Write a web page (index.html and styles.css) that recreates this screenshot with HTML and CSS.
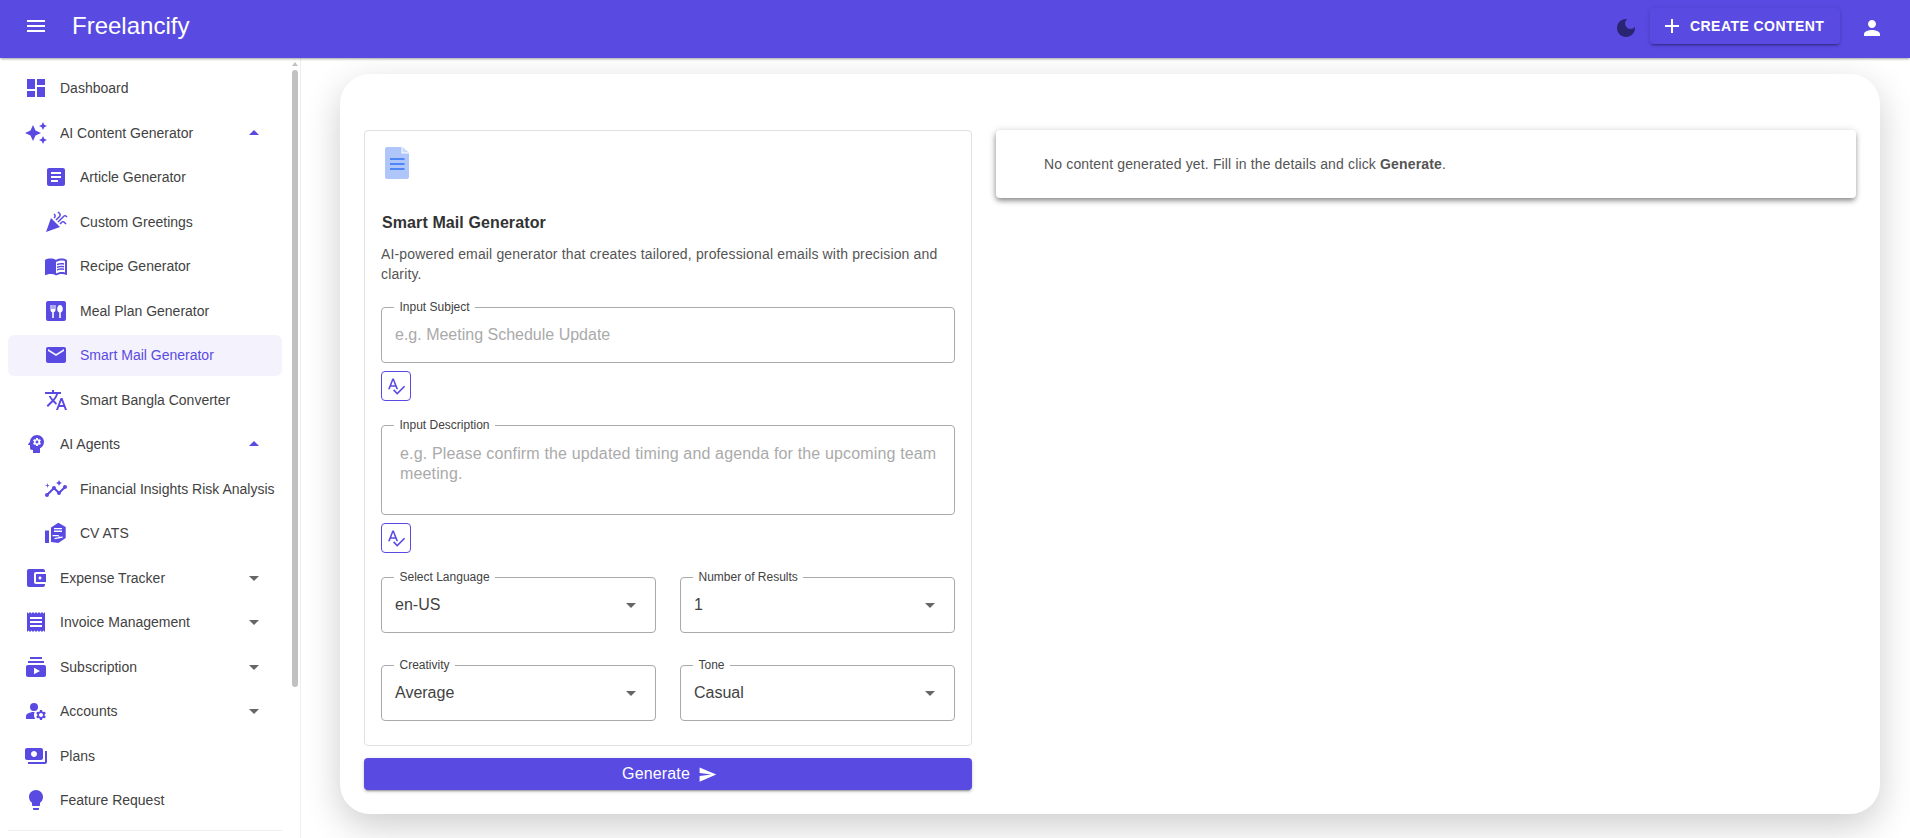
FILE: index.html
```html
<!DOCTYPE html>
<html lang="en">
<head>
<meta charset="utf-8">
<title>Freelancify</title>
<link rel="stylesheet" href="styles.css">
</head>
<body>
<div class="app">
  <header class="appbar">
    <svg class="icon bar-menu" viewBox="0 0 24 24"><path d="M3 18h18v-2H3v2zm0-5h18v-2H3v2zm0-7v2h18V6H3z"/></svg>
    <div class="brand">Freelancify</div>
    <svg class="icon moon" viewBox="0 0 24 24"><path d="M12 3c-4.97 0-9 4.03-9 9s4.03 9 9 9 9-4.03 9-9c0-.46-.04-.92-.1-1.36-.98 1.37-2.58 2.26-4.4 2.26-2.98 0-5.4-2.42-5.4-5.4 0-1.81.89-3.42 2.26-4.4-.44-.06-.9-.1-1.36-.1z"/></svg>
    <button class="create"><svg class="icon" viewBox="0 0 24 24"><path d="M19 13h-6v6h-2v-6H5v-2h6V5h2v6h6v2z"/></svg>Create Content</button>
    <svg class="icon user" viewBox="0 0 24 24"><path d="M12 12c2.21 0 4-1.79 4-4s-1.79-4-4-4-4 1.79-4 4 1.79 4 4 4zm0 2c-2.67 0-8 1.34-8 4v2h16v-2c0-2.66-5.33-4-8-4z"/></svg>
  </header>
  <div class="body">
    <aside class="sidebar">
      <nav class="nav">
        <a class="row"><svg class="icon" viewBox="0 0 24 24"><path d="M3 13h8V3H3v10zm0 8h8v-6H3v6zm10 0h8V11h-8v10zm0-18v6h8V3h-8z"/></svg><span>Dashboard</span></a>
        <a class="row"><svg class="icon" viewBox="0 0 24 24"><path d="M19 9l1.25-2.75L23 5l-2.75-1.25L19 1l-1.25 2.75L15 5l2.75 1.25L19 9zm-7.5.5L9 4 6.5 9.5 1 12l5.5 2.5L9 20l2.5-5.5L17 12l-5.5-2.5zM19 15l-1.25 2.75L15 19l2.75 1.25L19 23l1.25-2.75L23 19l-2.75-1.25L19 15z"/></svg><span>AI Content Generator</span><svg class="icon caret up" viewBox="0 0 24 24"><path d="M7 14l5-5 5 5z"/></svg></a>
        <a class="row sub"><svg class="icon" viewBox="0 0 24 24"><path d="M19 3H5c-1.1 0-2 .9-2 2v14c0 1.1.9 2 2 2h14c1.1 0 2-.9 2-2V5c0-1.1-.9-2-2-2zm-5 14H7v-2h7v2zm3-4H7v-2h10v2zm0-4H7V7h10v2z"/></svg><span>Article Generator</span></a>
        <a class="row sub"><svg class="icon" viewBox="0 0 24 24"><path d="M2 22l14-5-9-9zM14.53 12.53l5.59-5.59c.49-.49 1.28-.49 1.77 0l.59.59 1.06-1.06-.59-.59c-1.07-1.07-2.82-1.07-3.89 0l-5.59 5.59 1.06 1.06zM10.06 6.88l-.59.59 1.06 1.06.59-.59c1.07-1.07 1.07-2.82 0-3.89l-.59-.59-1.06 1.07.59.59c.48.48.48 1.28 0 1.76zM17.06 11.88l-1.59 1.59 1.06 1.06 1.59-1.59c.49-.49 1.28-.49 1.77 0l1.61 1.61 1.06-1.06-1.61-1.61c-1.08-1.07-2.82-1.07-3.89 0zM15.06 5.88l-3.59 3.59 1.06 1.06 3.59-3.59c1.07-1.07 1.07-2.82 0-3.89l-1.59-1.59-1.06 1.06 1.59 1.59c.48.49.48 1.29 0 1.77z"/></svg><span>Custom Greetings</span></a>
        <a class="row sub"><svg class="icon" viewBox="0 0 24 24"><path d="M21 5c-1.11-.35-2.33-.5-3.5-.5-1.95 0-4.05.4-5.5 1.5-1.45-1.1-3.55-1.5-5.5-1.5S2.45 4.9 1 6v14.65c0 .25.25.5.5.5.1 0 .15-.05.25-.05C3.1 20.45 5.05 20 6.5 20c1.95 0 4.05.4 5.5 1.5 1.35-.85 3.8-1.5 5.5-1.5 1.65 0 3.35.3 4.75 1.05.1.05.15.05.25.05.25 0 .5-.25.5-.5V6c-.6-.45-1.25-.75-2-1zm0 13.5c-1.1-.35-2.3-.5-3.5-.5-1.7 0-4.15.65-5.5 1.5V8c1.35-.85 3.8-1.5 5.5-1.5 1.2 0 2.4.15 3.5.5v11.5z"/><path d="M17.5 10.5c.88 0 1.73.09 2.5.26V9.24c-.79-.15-1.64-.24-2.5-.24-1.7 0-3.24.29-4.5.83v1.66c1.13-.64 2.7-.99 4.5-.99zM13 12.49v1.66c1.13-.64 2.7-.99 4.5-.99.88 0 1.73.09 2.5.26V11.9c-.79-.15-1.64-.24-2.5-.24-1.7 0-3.24.3-4.5.83zM17.5 14.33c-1.7 0-3.24.29-4.5.83v1.66c1.13-.64 2.7-.99 4.5-.99.88 0 1.73.09 2.5.26v-1.52c-.79-.16-1.64-.24-2.5-.24z"/></svg><span>Recipe Generator</span></a>
        <a class="row sub"><svg class="icon" viewBox="0 0 24 24"><path fill-rule="evenodd" d="M4 2h16a2 2 0 0 1 2 2v16a2 2 0 0 1-2 2H4a2 2 0 0 1-2-2V4a2 2 0 0 1 2-2zm2.500 4v5c0 1.200.7 2 1.700 2.300V19h1.600v-5.700c1-.3 1.700-1.100 1.700-2.300V6h-1.100v4h-.9V6H8.500v4h-.9V6zm9.500 0c-1.700 0-2.800 1.900-2.800 4 0 1.700.8 3 2 3.400V19h1.600v-5.600c1.200-.4 2-1.700 2-3.400 0-2.100-1.100-4-2.800-4z"/></svg><span>Meal Plan Generator</span></a>
        <a class="row sub active"><svg class="icon" viewBox="0 0 24 24"><path d="M20 4H4c-1.1 0-1.99.9-1.99 2L2 18c0 1.1.9 2 2 2h16c1.1 0 2-.9 2-2V6c0-1.1-.9-2-2-2zm0 4l-8 5-8-5V6l8 5 8-5v2z"/></svg><span>Smart Mail Generator</span></a>
        <a class="row sub"><svg class="icon" viewBox="0 0 24 24"><path d="M12.87 15.07l-2.54-2.51.03-.03c1.74-1.94 2.98-4.17 3.71-6.53H17V4h-7V2H8v2H1v1.99h11.17C11.5 7.92 10.44 9.75 9 11.35 8.07 10.32 7.3 9.19 6.69 8h-2c.73 1.63 1.73 3.17 2.98 4.56l-5.09 5.02L4 19l5-5 3.11 3.11.76-2.04zM18.5 10h-2L12 22h2l1.12-3h4.75L21 22h2l-4.5-12zm-2.62 7l1.62-4.33L19.12 17h-3.24z"/></svg><span>Smart Bangla Converter</span></a>
        <a class="row"><svg class="icon" viewBox="0 0 24 24"><path d="M13 8.57c-.79 0-1.43.64-1.43 1.43s.64 1.43 1.43 1.43 1.43-.64 1.43-1.43-.64-1.43-1.43-1.43z"/><path d="M13 3C9.25 3 6.2 5.94 6.02 9.64L4.1 12.2c-.25.33-.01.8.4.8H6v3c0 1.1.9 2 2 2h1v3h7v-4.68c2.36-1.12 4-3.53 4-6.32 0-3.87-3.13-7-7-7zm3 7c0 .13-.01.26-.02.39l.83.66c.08.06.1.16.05.25l-.8 1.39c-.05.09-.16.12-.24.09l-.99-.4c-.21.16-.43.29-.67.39L14 13.83c-.01.1-.1.17-.2.17h-1.6c-.1 0-.18-.07-.2-.17l-.15-1.06c-.25-.1-.47-.23-.68-.39l-.99.4c-.09.03-.2 0-.25-.09l-.8-1.39c-.05-.08-.03-.19.05-.25l.84-.66c-.01-.13-.02-.26-.02-.39s.02-.27.04-.39l-.85-.66c-.08-.06-.1-.16-.05-.26l.8-1.38c.05-.09.15-.12.24-.09l1 .4c.2-.15.43-.29.67-.39L12 6.17c.02-.1.1-.17.2-.17h1.6c.1 0 .18.07.2.17l.15 1.06c.24.1.46.23.67.39l1-.4c.09-.03.2 0 .24.09l.8 1.38c.05.09.03.2-.05.26l-.85.66c.03.12.04.25.04.39z"/></svg><span>AI Agents</span><svg class="icon caret up" viewBox="0 0 24 24"><path d="M7 14l5-5 5 5z"/></svg></a>
        <a class="row sub"><svg class="icon" viewBox="0 0 24 24"><path d="M21 8c-1.45 0-2.26 1.44-1.93 2.51l-3.55 3.56c-.3-.09-.74-.09-1.04 0l-2.55-2.55C12.27 10.45 11.46 9 10 9c-1.45 0-2.27 1.44-1.93 2.52l-4.56 4.55C2.44 15.74 1 16.55 1 18c0 1.1.9 2 2 2 1.45 0 2.26-1.44 1.93-2.51l4.55-4.56c.3.09.74.09 1.04 0l2.55 2.55C12.73 16.55 13.54 18 15 18c1.45 0 2.27-1.44 1.93-2.52l3.56-3.55c1.07.33 2.51-.48 2.51-1.93 0-1.1-.9-2-2-2z"/><path d="M15 9l.94-2.07L18 6l-2.06-.93L15 3l-.92 2.07L12 6l2.08.93zM3.5 11 4 9l2-.5L4 8l-.5-2L3 8l-2 .5L3 9z"/></svg><span>Financial Insights Risk Analysis</span></a>
        <a class="row sub"><svg class="icon" viewBox="0 0 24 24"><path d="M1 9.500h4V22H1z"/><path fill-rule="evenodd" d="M14.300 1.700 21.700 6v11l-7.400 5-7.300-1V6.500zM10 7v1.300h8V7zm0 2.600v1.300h8V9.600zm-1.500 4.300v1.400h5.800c.6 0 .7.800.1 1l-3.900.7.200 1.300 7.800-1.500c.6-.2.300-1.300-.4-1.200l-2.600.4c-.1-1.300-.9-1.900-1.800-1.900z"/></svg><span>CV ATS</span></a>
        <a class="row"><svg class="icon" viewBox="0 0 24 24"><path d="M21 18v1c0 1.1-.9 2-2 2H5c-1.11 0-2-.9-2-2V5c0-1.1.89-2 2-2h14c1.1 0 2 .9 2 2v1h-9c-1.11 0-2 .9-2 2v8c0 1.1.89 2 2 2h9zm-9-2h10V8H12v8zm4-2.500c-.83 0-1.500-.67-1.500-1.500s.67-1.500 1.500-1.500 1.500.67 1.500 1.500-.67 1.500-1.500 1.500z"/></svg><span>Expense Tracker</span><svg class="icon caret" viewBox="0 0 24 24"><path d="M7 10l5 5 5-5z"/></svg></a>
        <a class="row"><svg class="icon" viewBox="0 0 24 24"><path d="M18 17H6v-2h12v2zm0-4H6v-2h12v2zm0-4H6V7h12v2zM3 22l1.500-1.500L6 22l1.500-1.500L9 22l1.500-1.500L12 22l1.500-1.500L15 22l1.500-1.500L18 22l1.500-1.500L21 22V2l-1.500 1.500L18 2l-1.500 1.500L15 2l-1.500 1.500L12 2l-1.500 1.500L9 2 7.500 3.500 6 2 4.500 3.500 3 2v20z"/></svg><span>Invoice Management</span><svg class="icon caret" viewBox="0 0 24 24"><path d="M7 10l5 5 5-5z"/></svg></a>
        <a class="row"><svg class="icon" viewBox="0 0 24 24"><path d="M20 8H4V6h16v2zm-2-6H6v2h12V2zm4 10v8c0 1.1-.9 2-2 2H4c-1.1 0-2-.9-2-2v-8c0-1.1.9-2 2-2h16c1.1 0 2 .9 2 2zm-6 4l-6-3.27v6.53L16 16z"/></svg><span>Subscription</span><svg class="icon caret" viewBox="0 0 24 24"><path d="M7 10l5 5 5-5z"/></svg></a>
        <a class="row"><svg class="icon" viewBox="0 0 24 24"><circle cx="10" cy="8" r="4"/><path d="M10.67 13.02c-.22-.01-.44-.02-.67-.02-2.42 0-4.68.67-6.61 1.82-.88.52-1.39 1.5-1.39 2.53V20h9.26c-.79-1.13-1.26-2.51-1.26-4 0-1.07.25-2.07.67-2.98z"/><path d="M20.75 16c0-.22-.03-.42-.06-.63l1.14-1.01-1-1.73-1.45.49c-.32-.27-.68-.48-1.08-.63L18 11h-2l-.3 1.49c-.4.15-.76.36-1.08.63l-1.45-.49-1 1.73 1.14 1.01c-.03.21-.06.41-.06.63s.03.42.06.63l-1.14 1.01 1 1.73 1.45-.49c.32.27.68.48 1.08.63L16 21h2l.3-1.49c.4-.15.76-.36 1.08-.63l1.45.49 1-1.73-1.14-1.01c.03-.21.06-.41.06-.63zM17 18c-1.1 0-2-.9-2-2s.9-2 2-2 2 .9 2 2-.9 2-2 2z"/></svg><span>Accounts</span><svg class="icon caret" viewBox="0 0 24 24"><path d="M7 10l5 5 5-5z"/></svg></a>
        <a class="row"><svg class="icon" viewBox="0 0 24 24"><path d="M19 14V6c0-1.1-.9-2-2-2H3c-1.1 0-2 .9-2 2v8c0 1.1.9 2 2 2h14c1.1 0 2-.9 2-2zm-9-1c-1.66 0-3-1.34-3-3s1.34-3 3-3 3 1.34 3 3-1.34 3-3 3zm13-6v11c0 1.1-.9 2-2 2H4v-2h17V7h2z"/></svg><span>Plans</span></a>
        <a class="row"><svg class="icon" viewBox="0 0 24 24"><path d="M9 21c0 .55.45 1 1 1h4c.55 0 1-.45 1-1v-1H9v1zm3-19C8.14 2 5 5.14 5 9c0 2.38 1.19 4.47 3 5.74V17c0 .55.45 1 1 1h6c.55 0 1-.45 1-1v-2.26c1.81-1.27 3-3.36 3-5.74 0-3.86-3.14-7-7-7z"/></svg><span>Feature Request</span></a>
        <hr class="divider">
      </nav>
      <div class="scroll-arrow"></div>
      <div class="scroll-thumb"></div>
    </aside>
    <main class="main">
      <section class="card">
        <div class="form-col">
          <div class="panel">
            <svg class="doc" viewBox="0 0 24 32"><path class="doc-page" d="M2 0h14.500v6.500H24V30a2 2 0 0 1-2 2H2a2 2 0 0 1-2-2V2a2 2 0 0 1 2-2z"/><path class="doc-fold" d="M17.500 0 24 5.500h-6.500z"/><path class="doc-lines" d="M5 11h14.500v2H5zM5 16h14.500v2H5zM5 21h14.500v2H5z"/></svg>
            <h2 class="title">Smart Mail Generator</h2>
            <p class="desc">AI-powered email generator that creates tailored, professional emails with precision and clarity.</p>
            <fieldset class="field">
              <legend>Input Subject</legend>
              <input class="control" type="text" placeholder="e.g. Meeting Schedule Update">
            </fieldset>
            <button class="spell"><svg class="icon" viewBox="0 0 24 24"><path d="M12.45 16h2.09L9.43 3H7.57L2.46 16h2.09l1.12-3h5.64l1.14 3zm-6.02-5L8.5 5.48 10.57 11H6.43zm15.16.59l-8.09 8.09L9.83 16l-1.41 1.41 5.09 5.09L23 13l-1.41-1.41z"/></svg></button>
            <fieldset class="field area">
              <legend>Input Description</legend>
              <textarea class="control" placeholder="e.g. Please confirm the updated timing and agenda for the upcoming team meeting."></textarea>
            </fieldset>
            <button class="spell"><svg class="icon" viewBox="0 0 24 24"><path d="M12.45 16h2.09L9.43 3H7.57L2.46 16h2.09l1.12-3h5.64l1.14 3zm-6.02-5L8.5 5.48 10.57 11H6.43zm15.16.59l-8.09 8.09L9.83 16l-1.41 1.41 5.09 5.09L23 13l-1.41-1.41z"/></svg></button>
            <div class="selects">
              <fieldset class="field select"><legend>Select Language</legend><div class="value">en-US<svg class="icon" viewBox="0 0 24 24"><path d="M7 10l5 5 5-5z"/></svg></div></fieldset>
              <fieldset class="field select"><legend>Number of Results</legend><div class="value">1<svg class="icon" viewBox="0 0 24 24"><path d="M7 10l5 5 5-5z"/></svg></div></fieldset>
              <fieldset class="field select"><legend>Creativity</legend><div class="value">Average<svg class="icon" viewBox="0 0 24 24"><path d="M7 10l5 5 5-5z"/></svg></div></fieldset>
              <fieldset class="field select"><legend>Tone</legend><div class="value">Casual<svg class="icon" viewBox="0 0 24 24"><path d="M7 10l5 5 5-5z"/></svg></div></fieldset>
            </div>
          </div>
          <button class="generate">Generate<svg class="icon" viewBox="0 0 24 24"><path d="M2.01 21L23 12 2.01 3 2 10l15 2-15 2z"/></svg></button>
        </div>
        <div class="result">
          <p>No content generated yet. Fill in the details and click <strong>Generate</strong>.</p>
        </div>
      </section>
    </main>
  </div>
</div>
</body>
</html>
```
FILE: styles.css
```css
* { box-sizing: border-box; }
html, body { margin: 0; height: 100%; overflow: hidden; }
body { font-family: "Liberation Sans", Arial, sans-serif; color: #424242; background: #fff; }
.icon { width: 24px; height: 24px; fill: currentColor; flex: none; display: block; }

.app { display: flex; flex-direction: column; height: 838px; }
.appbar { position: relative; z-index: 2; flex: none; height: 58px; background: #594ae2; color: #fff; display: flex; align-items: center; padding: 0 26px 6px 24px; box-shadow: 0 2px 2px -1px rgba(0,0,0,.25), 0 1px 3px rgba(0,0,0,.14); }
.brand { font-size: 24px; margin-left: 24px; flex: 1; }
.moon { color: #2a2572; margin: 4px 12px 0 0; }
.create { height: 36px; width: 190px; margin-right: 20px; border: 0; border-radius: 4px; background: #594ae2; color: #fff; font: bold 14px "Liberation Sans", Arial, sans-serif; letter-spacing: .45px; text-transform: uppercase; display: flex; align-items: center; justify-content: flex-start; gap: 6px; padding: 0 0 0 10px; box-shadow: 0 3px 1px -2px rgba(0,0,0,.2), 0 2px 2px rgba(0,0,0,.14), 0 1px 5px rgba(0,0,0,.12); }
.user { margin-top: 4px; }

.body { flex: 1; display: flex; min-height: 0; }
.sidebar { flex: none; width: 301px; height: 780px; overflow: hidden; background: #fff; border-right: 1px solid #eee; position: relative; z-index: 1; }
.scroll-thumb { position: absolute; left: 292px; top: 12px; width: 6px; height: 617px; background: #c1c1c1; border-radius: 3px; }
.scroll-arrow { position: absolute; left: 292px; top: 4px; width: 0; height: 0; border: 3px solid transparent; border-top: 0; border-bottom: 4px solid #c1c1c1; }
.nav { padding: 9.5px 10px 0 8px; width: 292px; }
.row { height: 41px; margin-bottom: 3.5px; display: flex; align-items: center; padding-left: 16px; border-radius: 6px; color: #424242; font-size: 14px; }
.row > .icon:first-child { color: #594ae2; margin-right: 12px; }
.row.sub { padding-left: 36px; }
.row.active { background: #f4f3fd; color: #594ae2; }
.caret { margin-left: auto; margin-right: 16px; color: #666; }
.caret.up { color: #594ae2; }
.divider { border: 0; border-top: 1px solid #eee; margin: 9px 0 0; }

.main { flex: 1; min-width: 0; padding: 16px 30px 24px 39px; }
.card { height: 740px; background: #fff; border-radius: 30px; padding: 56px 24px 24px; display: grid; grid-template-columns: 608px 1fr; column-gap: 24px; align-items: start; box-shadow: 0 12px 36px rgba(0,0,0,.2); }

.panel { height: 616px; border: 1px solid #e0e0e0; border-radius: 4px; padding: 16px 16px 0; }
.doc { display: block; width: 24px; height: 32px; margin-left: 4px; }
.doc-page { fill: #aec6f9; }
.doc-fold { fill: #c9d9fb; }
.doc-lines { fill: #4f86f7; }
.title { margin: 34px 0 0 1px; font-size: 16px; line-height: 20px; font-weight: bold; letter-spacing: .1px; color: #333; }
.desc { margin: 11px 0 0; font-size: 14px; line-height: 20px; letter-spacing: .15px; color: #555; }

.field { margin: 0; padding: 0; min-width: 0; height: 63px; border: 1px solid #aaa; border-radius: 4px; display: flex; flex-direction: column; }
.desc + .field { margin-top: 16px; }
legend { margin-left: 12px; padding: 1px 5.5px; font-size: 12px; line-height: 12px; color: #424242; white-space: nowrap; }
.control { display: block; width: 100%; border: 0; outline: 0; background: transparent; font: 16px/20px "Liberation Sans", Arial, sans-serif; color: #424242; padding: 0 13px; margin-top: 11px; resize: none; }
.control::placeholder { color: #aaa; opacity: 1; }
.area { height: 97px; margin-top: 17px; }
.area .control { padding: 0 8px 0 18px; margin-top: 12px; height: 60px; letter-spacing: .15px; }
.spell { display: flex; align-items: center; justify-content: center; width: 30px; height: 30px; margin-top: 8px; padding: 0; border: 1px solid #594ae2; border-radius: 4px; background: #fff; color: #594ae2; }
.spell .icon { width: 20px; height: 20px; }

.selects { display: grid; grid-template-columns: 1fr 1fr; column-gap: 24px; row-gap: 25px; margin-top: 17px; }
.value { display: flex; align-items: center; justify-content: space-between; font-size: 16px; line-height: 20px; color: #424242; padding: 0 13px; margin-top: 11px; height: 20px; }
.value .icon { color: #666; margin-right: -1px; }

.generate { display: flex; align-items: center; justify-content: center; gap: 8px; width: 100%; height: 32px; margin-top: 12px; padding: 0 0 0 3px; border: 0; border-radius: 4px; background: #594ae2; color: #fff; font: 16px "Liberation Sans", Arial, sans-serif; letter-spacing: .15px; box-shadow: 0 3px 1px -2px rgba(0,0,0,.2), 0 2px 2px rgba(0,0,0,.14), 0 1px 5px rgba(0,0,0,.12); }
.generate .icon { width: 19px; height: 19px; }

.result { height: 68px; background: #fff; border-radius: 4px; display: flex; align-items: center; padding-left: 48px; box-shadow: 0 3px 5px -1px rgba(0,0,0,.3), -1px 3px 6px rgba(0,0,0,.2), 0 0 8px rgba(0,0,0,.1); }
.result p { margin: 0; font-size: 14px; letter-spacing: .15px; color: #555; }
.result strong { font-weight: bold; }
```
